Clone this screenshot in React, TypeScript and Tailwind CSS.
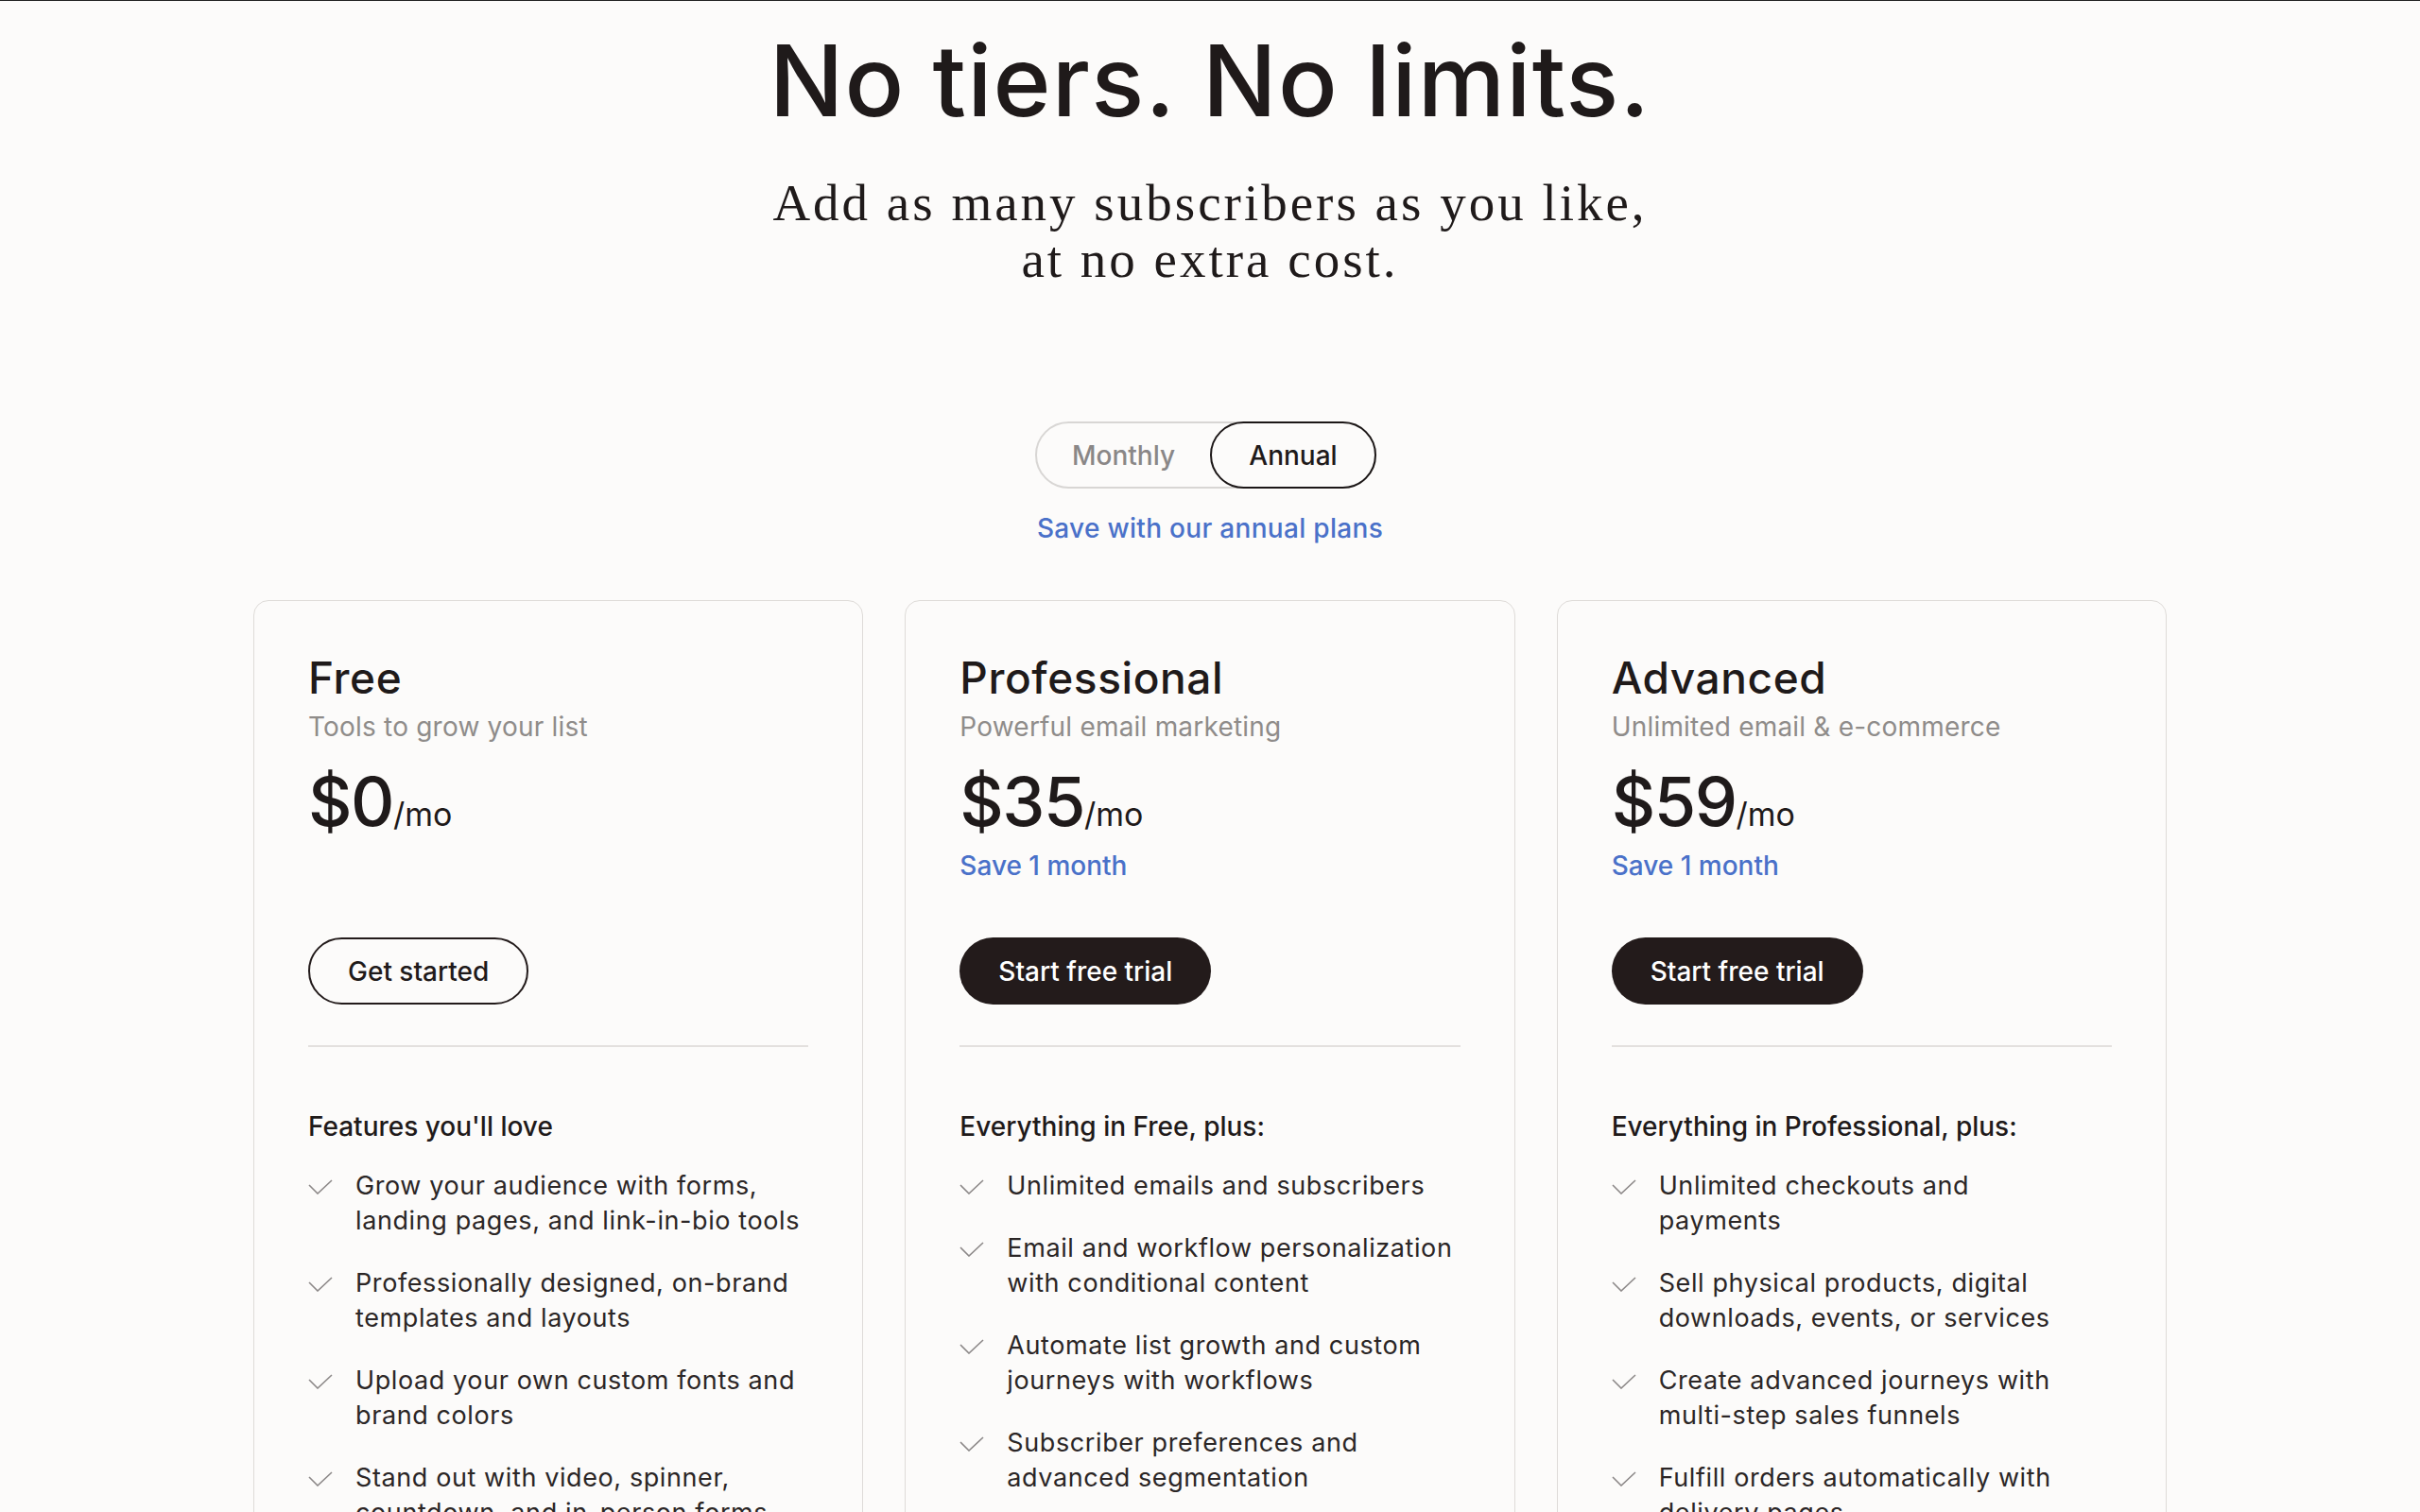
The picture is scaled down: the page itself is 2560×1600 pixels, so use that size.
import React from "react"

type Plan = {
  name: string
  tagline: string
  price: string
  save?: string
  cta: string
  primary: boolean
  featuresTitle: string
  features: string[][]
}

const plans: Plan[] = [
  {
    name: "Free",
    tagline: "Tools to grow your list",
    price: "$0",
    cta: "Get started",
    primary: false,
    featuresTitle: "Features you'll love",
    features: [
      ["Grow your audience with forms,", "landing pages, and link-in-bio tools"],
      ["Professionally designed, on-brand", "templates and layouts"],
      ["Upload your own custom fonts and", "brand colors"],
      ["Stand out with video, spinner,", "countdown, and in-person forms"],
    ],
  },
  {
    name: "Professional",
    tagline: "Powerful email marketing",
    price: "$35",
    save: "Save 1 month",
    cta: "Start free trial",
    primary: true,
    featuresTitle: "Everything in Free, plus:",
    features: [
      ["Unlimited emails and subscribers"],
      ["Email and workflow personalization", "with conditional content"],
      ["Automate list growth and custom", "journeys with workflows"],
      ["Subscriber preferences and", "advanced segmentation"],
    ],
  },
  {
    name: "Advanced",
    tagline: "Unlimited email & e-commerce",
    price: "$59",
    save: "Save 1 month",
    cta: "Start free trial",
    primary: true,
    featuresTitle: "Everything in Professional, plus:",
    features: [
      ["Unlimited checkouts and", "payments"],
      ["Sell physical products, digital", "downloads, events, or services"],
      ["Create advanced journeys with", "multi-step sales funnels"],
      ["Fulfill orders automatically with", "delivery pages"],
    ],
  },
]

function Check() {
  return (
    <svg width="26" height="16" viewBox="0 0 26 16" fill="none" className="mt-[12px] shrink-0">
      <path d="M1 6 L10 15 L25 1" stroke="#8c8888" strokeWidth="1.6" />
    </svg>
  )
}

function PlanCard({ plan }: { plan: Plan }) {
  return (
    <div className="rounded-[16px] border border-[#dedbd8] bg-[#fcfbfa] px-[57px] pt-[53px] pb-[60px]">
      <h2 className="text-[46px] leading-[56px] font-medium text-[#1f1a1a] tracking-[0.6px]">{plan.name}</h2>
      <p className="mt-[6px] text-[28px] leading-[36px] text-[#8f8c8a] tracking-[0.2px]">{plan.tagline}</p>
      <div className="mt-[21px] flex items-baseline h-[80px]">
        <span className="text-[72px] leading-[80px] font-medium text-[#1f1a1a] tracking-[-1.5px]">{plan.price}</span>
        <span className="text-[34px] text-[#1f1a1a]">/mo</span>
      </div>
      <p className="mt-[10px] h-[36px] text-[28px] leading-[36px] font-medium text-[#4a71c9]">{plan.save ?? ""}</p>
      <div className="mt-[58px]">
        {plan.primary ? (
          <button className="h-[71px] px-[41px] rounded-full bg-[#231b1b] text-white text-[28px] font-medium">
            {plan.cta}
          </button>
        ) : (
          <button className="h-[71px] px-[40px] rounded-full border-2 border-[#231b1b] text-[#1f1a1a] text-[28px] font-medium">
            {plan.cta}
          </button>
        )}
      </div>
      <div className="mt-[43px] h-[2px] bg-[#e3e0de]" />
      <h3 className="mt-[66px] text-[28px] leading-[36px] font-medium text-[#1f1a1a]">{plan.featuresTitle}</h3>
      <ul className="mt-[26px] flex flex-col gap-[29px]">
        {plan.features.map((lines, i) => (
          <li key={i} className="flex gap-[24px]">
            <Check />
            <span className="text-[27px] leading-[37px] text-[#2b2626] tracking-[0.6px]">
              {lines.map((l, j) => (
                <span key={j} className="block whitespace-nowrap">
                  {l}
                </span>
              ))}
            </span>
          </li>
        ))}
      </ul>
    </div>
  )
}

export default function App() {
  return (
    <div
      className="min-h-screen bg-[#fcfbfa] border-t border-[#222]"
      style={{ fontFamily: "Inter, 'Noto Sans', sans-serif" }}
    >
      <div className="flex flex-col items-center pt-[32px]">
        <h1 className="text-[104px] leading-[104px] font-medium text-[#1f1a1a] tracking-[1.2px]">
          No tiers. No limits.
        </h1>
        <p
          className="mt-[48px] text-center text-[55px] leading-[60px] text-[#1f1a1a] tracking-[3px]"
          style={{ fontFamily: "'Liberation Serif', serif" }}
        >
          Add as many subscribers as you like,
          <br />
          at no extra cost.
        </p>

        <div className="mt-[141px] mr-[9px] flex h-[71px] w-[361px] rounded-full border-2 border-[#d8d6d4]">
          <div className="flex-1 flex items-center justify-center text-[28px] font-medium text-[#8a8787]">Monthly</div>
          <div className="-my-[2px] -mr-[2px] w-[176px] flex items-center justify-center rounded-full border-2 border-[#1c1717] text-[28px] font-medium text-[#1f1a1a]">
            Annual
          </div>
        </div>
        <p className="mt-[24px] text-[28px] leading-[36px] font-medium text-[#4a71c9] tracking-[0.3px]">
          Save with our annual plans
        </p>

        <div className="mt-[58px] grid grid-cols-3 gap-[44px] w-[2024px]">
          {plans.map((p) => (
            <PlanCard key={p.name} plan={p} />
          ))}
        </div>
      </div>
    </div>
  )
}
